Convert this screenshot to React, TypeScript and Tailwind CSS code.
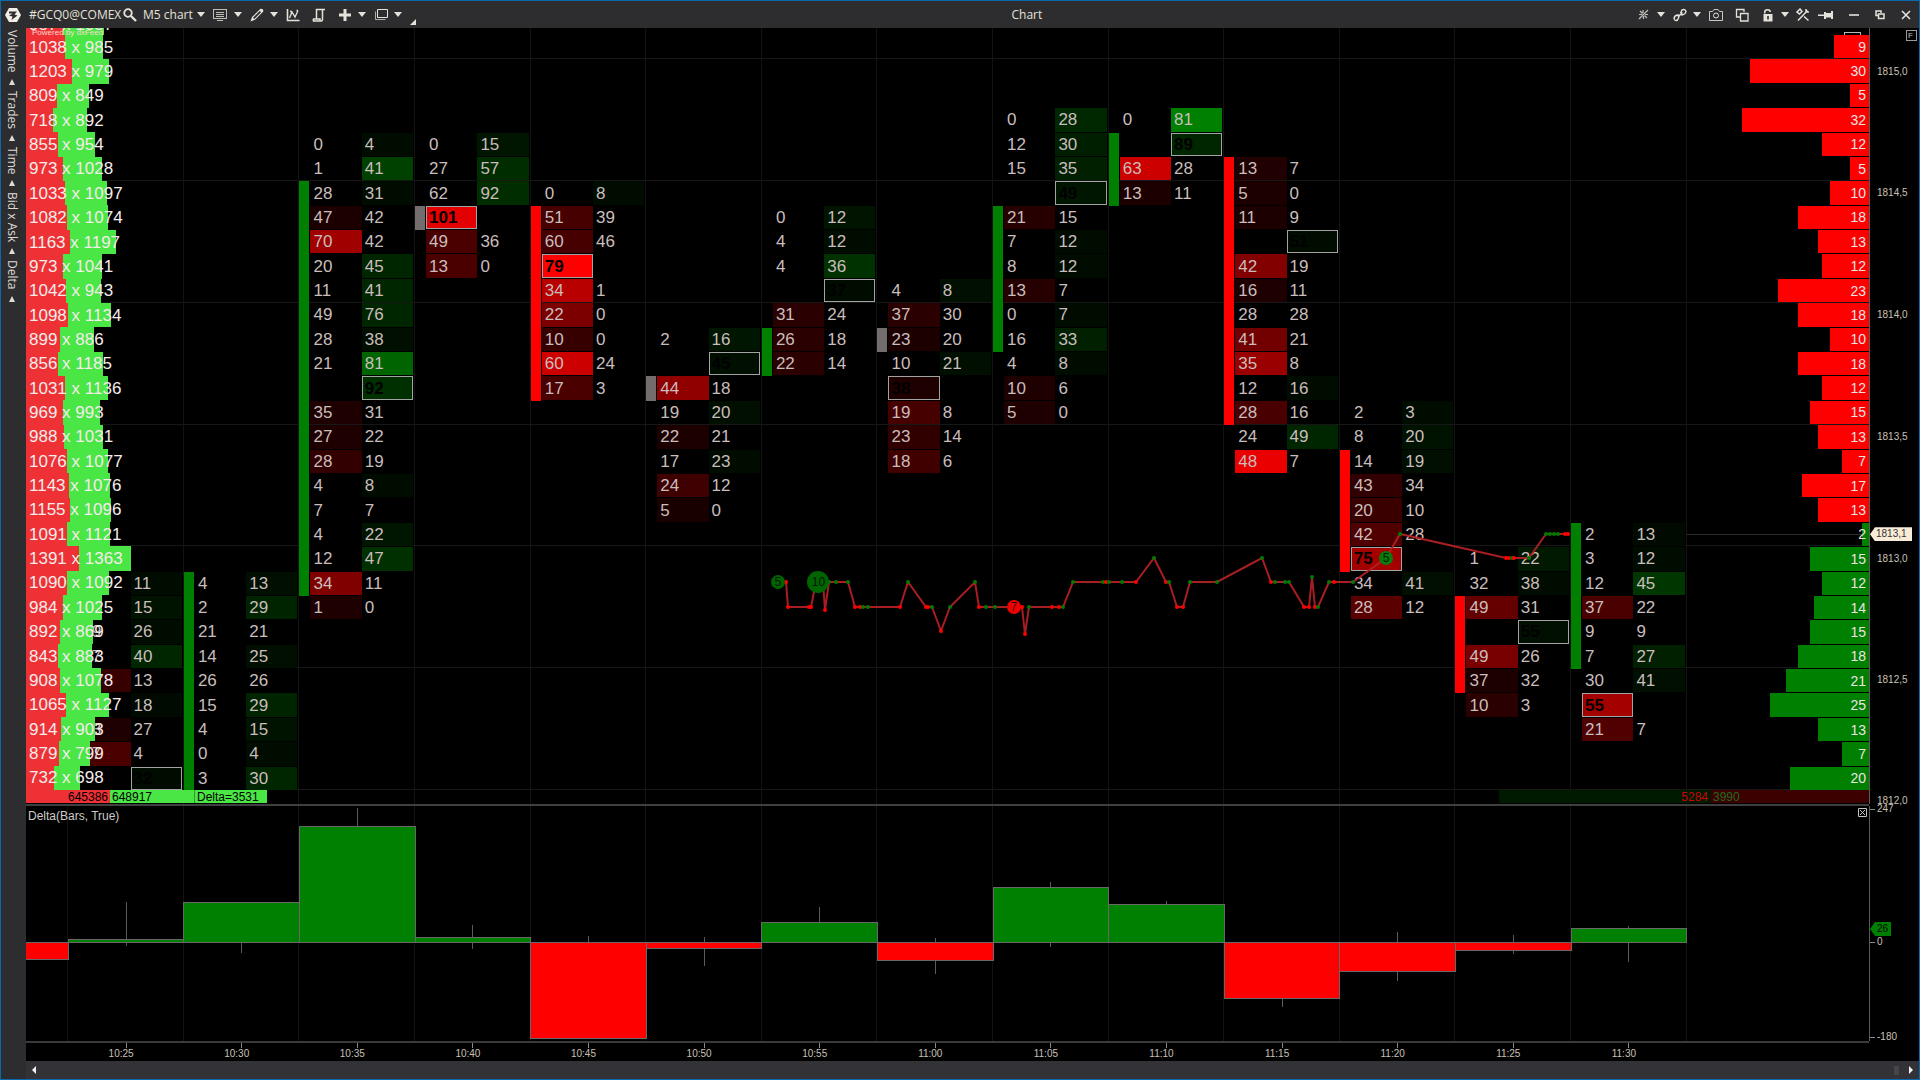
import React from "react";

/* ---------- data ---------- */

type Side = [value: number | null, shade?: number, marked?: boolean];
type Level = [bid: Side, ask: Side];
type Cluster = {
  time?: string;
  start: number;
  candle?: [from: number, to: number, color: "up" | "down" | "flat"];
  levels: Level[];
};

const clusters: Cluster[] = [
  {
    time: "10:25",
    start: 22,
    levels: [
      [[null], [11, 12]],
      [[null], [15, 18]],
      [[19], [26, 12]],
      [[17], [40, 38]],
      [[null, 55], [13]],
      [[null], [18, 10]],
      [[13, 30], [27]],
      [[17, 75], [4]],
      [[null], [32, 12, true]],
    ],
  },
  {
    time: "10:30",
    start: 22,
    candle: [22, 30, "up"],
    levels: [
      [[4], [13, 15]],
      [[2], [29, 35]],
      [[21], [21]],
      [[14], [25, 15]],
      [[26], [26]],
      [[15], [29, 35]],
      [[4], [15, 18]],
      [[0], [4, 12]],
      [[3], [30, 38]],
    ],
  },
  {
    time: "10:35",
    start: 4,
    candle: [6, 22, "up"],
    levels: [
      [[0], [4, 12]],
      [[1], [41, 65]],
      [[28], [31, 12]],
      [[47, 28], [42]],
      [[70, 160], [42]],
      [[20], [45, 38]],
      [[11], [41, 38]],
      [[49], [76, 38]],
      [[28], [38, 15]],
      [[21], [81, 100]],
      [[null], [92, 48, true]],
      [[35, 30], [31]],
      [[27, 30], [22]],
      [[28, 50], [19]],
      [[4], [8, 12]],
      [[7], [7]],
      [[4], [22, 22]],
      [[12], [47, 48]],
      [[34, 128], [11]],
      [[1, 30], [0]],
    ],
  },
  {
    time: "10:40",
    start: 4,
    candle: [7, 7, "flat"],
    levels: [
      [[0], [15, 22]],
      [[27], [57, 45]],
      [[62], [92, 45]],
      [[101, 228, true], [null]],
      [[49, 75], [36]],
      [[13, 75], [0]],
    ],
  },
  {
    time: "10:45",
    start: 6,
    candle: [7, 14, "down"],
    levels: [
      [[0], [8, 12]],
      [[51, 70], [39]],
      [[60, 70], [46]],
      [[79, 255, true], [null]],
      [[34, 185], [1]],
      [[22, 125], [0]],
      [[10, 55], [0]],
      [[60, 205], [24]],
      [[17, 75], [3]],
    ],
  },
  {
    time: "10:50",
    start: 12,
    candle: [14, 14, "flat"],
    levels: [
      [[2], [16, 22]],
      [[null], [45, 15, true]],
      [[44, 145], [18]],
      [[19], [20, 15]],
      [[22, 28], [21]],
      [[17], [23, 12]],
      [[24, 62], [12]],
      [[5, 25], [0]],
    ],
  },
  {
    time: "10:55",
    start: 7,
    candle: [12, 13, "up"],
    levels: [
      [[0], [12, 20]],
      [[4], [12, 12]],
      [[4], [36, 50]],
      [[null], [37, 12, true]],
      [[31, 42], [24]],
      [[26, 42], [18]],
      [[22, 42], [14]],
    ],
  },
  {
    time: "11:00",
    start: 10,
    candle: [12, 12, "flat"],
    levels: [
      [[4], [8, 15]],
      [[37, 42], [30]],
      [[23, 28], [20]],
      [[10], [21, 15]],
      [[38, 30, true], [null]],
      [[19, 70], [8]],
      [[23, 48], [14]],
      [[18, 64], [6]],
    ],
  },
  {
    time: "11:05",
    start: 3,
    candle: [7, 12, "up"],
    levels: [
      [[0], [28, 40]],
      [[12], [30, 30]],
      [[15], [35, 32]],
      [[null], [49, 22, true]],
      [[21, 38], [15]],
      [[7], [12, 12]],
      [[8], [12, 12]],
      [[13, 38], [7]],
      [[0], [7, 12]],
      [[16], [33, 32]],
      [[4], [8, 12]],
      [[10, 30], [6]],
      [[5, 30], [0]],
    ],
  },
  {
    time: "11:10",
    start: 3,
    candle: [4, 6, "up"],
    levels: [
      [[0], [81, 128]],
      [[null], [89, 38, true]],
      [[63, 205], [28]],
      [[13, 28], [11]],
    ],
  },
  {
    time: "11:15",
    start: 5,
    candle: [5, 15, "down"],
    levels: [
      [[13, 32], [7]],
      [[5, 28], [0]],
      [[11, 28], [9]],
      [[null], [51, 12, true]],
      [[42, 130], [19]],
      [[16, 30], [11]],
      [[28], [28]],
      [[41, 115], [21]],
      [[35, 155], [8]],
      [[12], [16, 12]],
      [[28, 72], [16]],
      [[24], [49, 38]],
      [[48, 235], [7]],
    ],
  },
  {
    time: "11:20",
    start: 15,
    candle: [17, 21, "down"],
    levels: [
      [[2], [3, 12]],
      [[8], [20, 18]],
      [[14], [19, 15]],
      [[43, 50], [34]],
      [[20, 58], [10]],
      [[42, 80], [28]],
      [[75, 165, true], [null]],
      [[34], [41, 15]],
      [[28, 90], [12]],
    ],
  },
  {
    time: "11:25",
    start: 21,
    candle: [23, 26, "down"],
    levels: [
      [[1], [22, 25]],
      [[32], [38, 12]],
      [[49, 100], [31]],
      [[null], [55, 15, true]],
      [[49, 120], [26]],
      [[37, 28], [32]],
      [[10, 42], [3]],
    ],
  },
  {
    time: "11:30",
    start: 20,
    candle: [20, 25, "up"],
    levels: [
      [[2], [13, 10]],
      [[3], [12, 12]],
      [[12], [45, 55]],
      [[37, 75], [22]],
      [[9], [9]],
      [[7], [27, 32]],
      [[30], [41, 15]],
      [[55, 165, true], [null]],
      [[21, 80], [7]],
    ],
  },
];

const profile: [number, number][] = [
  [1038, 985], [1203, 979], [809, 849], [718, 892], [855, 954], [973, 1028],
  [1033, 1097], [1082, 1074], [1163, 1197], [973, 1041], [1042, 943],
  [1098, 1134], [899, 886], [856, 1185], [1031, 1136], [969, 993], [988, 1031],
  [1076, 1077], [1143, 1076], [1155, 1096], [1091, 1121], [1391, 1363],
  [1090, 1092], [984, 1025], [892, 869], [843, 883], [908, 1078], [1065, 1127],
  [914, 903], [879, 799], [732, 698],
];

const book = [
  9, 30, 5, 32, 12, 5, 10, 18, 13, 12, 23, 18, 10, 18, 12, 15, 13, 7, 17, 13, 2,
  15, 12, 14, 15, 18, 21, 25, 13, 7, 20,
];
const FIRST_ASK_ROW = 20;

const tape: [x: number, y: number, dot?: "g" | "r"][] = [
  [751, 554], [760, 554, "r"], [762, 579, "r"], [783, 579, "r"], [785, 579, "r"],
  [790, 554], [797, 554], [799, 582, "r"], [803, 554, "g"], [810, 554, "g"],
  [822, 554, "g"], [829, 579, "r"], [834, 579, "r"], [837, 579, "g"],
  [842, 579, "g"], [874, 579, "r"], [882, 554, "g"], [900, 579, "r"],
  [902, 579, "r"], [906, 579, "g"], [915, 603, "r"], [924, 579, "g"],
  [949, 554, "g"], [953, 579, "r"], [960, 579, "g"], [969, 579, "g"],
  [988, 579], [996, 579, "r"], [999, 606, "r"], [1003, 579, "g"],
  [1026, 579, "r"], [1033, 579, "r"], [1037, 579, "g"], [1047, 554, "g"],
  [1077, 554, "g"], [1080, 554, "r"], [1083, 554, "g"], [1096, 554, "g"],
  [1110, 554, "r"], [1128, 530, "g"], [1140, 554, "r"], [1143, 554, "g"],
  [1151, 579, "r"], [1157, 579, "r"], [1164, 554, "g"], [1191, 554, "g"],
  [1236, 530, "g"], [1245, 554, "r"], [1249, 554, "g"], [1259, 554, "g"],
  [1263, 554, "g"], [1278, 579, "r"], [1283, 579, "r"], [1286, 549, "g"],
  [1289, 579, "r"], [1292, 579, "g"], [1303, 554, "g"], [1308, 554, "r"],
  [1327, 554, "g"], [1360, 530], [1374, 506, "g"], [1480, 530, "r"],
  [1483, 530, "r"], [1486, 530, "g"], [1488, 530, "r"], [1503, 530, "g"],
  [1520, 506, "g"], [1524, 506, "g"], [1528, 506, "g"], [1532, 506, "g"],
  [1539, 506, "r"], [1542, 506, "r"],
];

const deltaBars: { value: number; high?: number; low?: number }[] = [
  { value: 3, high: 40, low: -4 },
  { value: 40, low: -11 },
  { value: 116, high: 134 },
  { value: 5, high: 17, low: -7 },
  { value: -96, high: 6 },
  { value: -6, high: 5, low: -24 },
  { value: 20, high: 35 },
  { value: -18, high: 4, low: -32 },
  { value: 55, high: 60, low: -5 },
  { value: 38, high: 41 },
  { value: -56, low: -65 },
  { value: -29, high: 10, low: -39 },
  { value: -8, high: 7, low: -12 },
  { value: 14, high: 16, low: -20 },
];

const priceLabels: [row: number, label: string][] = [
  [2, "1815,0"],
  [7, "1814,5"],
  [12, "1814,0"],
  [17, "1813,5"],
  [22, "1813,0"],
  [27, "1812,5"],
];

const columnsClass = "grid grid-cols-[423fr_repeat(14,1156fr)_1823fr]";
const rowsClass = "grid-rows-[repeat(31,minmax(0,1fr))]";

/* ---------- icons ---------- */

type IconProps = { children: React.ReactNode; w?: number; h?: number; fill?: boolean };

function Icon({ children, w = 14, h = 14, fill = false }: IconProps) {
  return (
    <svg
      width={w}
      height={h}
      viewBox={`0 0 ${w} ${h}`}
      fill={fill ? "currentColor" : "none"}
      stroke={fill ? "none" : "currentColor"}
      aria-hidden="true"
    >
      {children}
    </svg>
  );
}

function Caret() {
  return (
    <Icon w={8} h={5} fill>
      <path d="M0 0H8L4 5Z" />
    </Icon>
  );
}

function Tool({
  label,
  children,
  className = "",
}: {
  label: string;
  children: React.ReactNode;
  className?: string;
}) {
  return (
    <button type="button" aria-label={label} className={`flex h-5 shrink-0 items-center ${className}`}>
      {children}
    </button>
  );
}

/* ---------- header ---------- */

function TitleBar() {
  return (
    <header className="flex h-[27px] shrink-0 items-center bg-[#2d2d30] pr-2 pl-1 font-['Open_Sans',sans-serif] text-xs text-[#e4e2da]">
      <Icon w={16} h={16} fill>
        <path d="M4 1H12L16 8L12 15H4L0 8Z" fill="#f2efe8" />
        <path d="M4 4.500H12L9.500 7.500L12.500 8.500L6.500 13L7.500 9.500L4 8.800L7.500 6.500H4Z" fill="#2d2d30" />
      </Icon>
      <h1 className="ml-2 w-[94px] whitespace-nowrap">#GCQ0@COMEX</h1>
      <Tool label="Find instrument">
        <Icon>
          <circle cx="5" cy="5" r="3.800" strokeWidth="1.800" />
          <path d="M8 8L13 13" strokeWidth="2.400" />
        </Icon>
      </Tool>
      <Tool label="Chart period" className="ml-1.5 gap-1">
        <span className="whitespace-nowrap">M5 chart</span>
        <Caret />
      </Tool>
      <Tool label="Display" className="ml-2 gap-[7px]">
        <Icon>
          <rect x="0.500" y="1.500" width="13" height="9" opacity="0.800" />
          <path d="M3 4.500H11M3 6.500H11M3 8.500H11M4 12.500H10" opacity="0.800" />
        </Icon>
        <Caret />
      </Tool>
      <Tool label="Drawing" className="ml-2 gap-[6px]">
        <Icon fill>
          <path d="M0.500 13.500L2 9L10.500 0.800Q13.800 0.500 13.300 3.500L5 11.800ZM3 9.800L4.300 11L11 4.300L9.700 3Z" fillRule="evenodd" />
        </Icon>
        <Caret />
      </Tool>
      <Tool label="Indicators" className="ml-2">
        <Icon>
          <path d="M1.500 1V12.500H13.500" strokeWidth="1.600" />
          <path d="M3.500 10L6 4L9 9L12 2.500M6 3.500H4M10.500 2.500H12" strokeWidth="1.300" />
        </Icon>
      </Tool>
      <Tool label="Script" className="ml-3">
        <Icon>
          <path d="M4.500 11V1.500H13M10.500 1.500V11.500Q10.500 13 9 13H1.500Q0.800 11 2 11H8V12.500" strokeWidth="1.500" />
        </Icon>
      </Tool>
      <Tool label="Add" className="ml-3 gap-[6px]">
        <Icon fill>
          <path d="M5.500 1H8.500V5.500H13V8.500H8.500V13H5.500V8.500H1V5.500H5.500Z" />
        </Icon>
        <Caret />
      </Tool>
      <Tool label="Windows" className="ml-2 gap-[6px]">
        <Icon>
          <path d="M3.500 1.500H13.500V9.500H3.500Z" />
          <path d="M1.500 3.500V11.500H11.500" opacity="0.700" />
        </Icon>
        <Caret />
      </Tool>
      <span className="mt-[14px] ml-2">
        <Icon w={6} h={6} fill>
          <path d="M6 0V6H0Z" />
        </Icon>
      </span>

      <p className="flex-1 text-center">Chart</p>

      <Tool label="Snap" className="gap-2">
        <Icon w={11} h={11}>
          <path d="M1 10L10 1M2 2L4.500 4.500M6.500 6.500L9 9M5 1V4M1 5.500H4M7 5.500H10M5.500 7V10" strokeWidth="1.200" opacity="0.800" />
        </Icon>
        <Caret />
      </Tool>
      <Tool label="Link" className="ml-2 gap-[6px]">
        <Icon>
          <path d="M6 9L4.500 12Q1.500 13.500 1 10Q2 7 5 7L7 8M7 6L9 7Q12.500 6.500 13 3.500Q12 0.500 9 2L7.500 5M5 9L9.500 4.500" strokeWidth="1.400" />
        </Icon>
        <Caret />
      </Tool>
      <Tool label="Screenshot" className="ml-2">
        <Icon>
          <path d="M0.500 3.500H3.500L5 1.500H9L10.500 3.500H13.500V12.500H0.500Z" opacity="0.850" />
          <circle cx="7" cy="7.500" r="2.500" />
        </Icon>
      </Tool>
      <Tool label="Duplicate" className="ml-3">
        <Icon>
          <path d="M9 4V1.500H1.500V9H5M5.500 5.500H13V13H5.500Z" strokeWidth="1.300" />
        </Icon>
      </Tool>
      <Tool label="Lock" className="ml-3.5 gap-2">
        <Icon w={10} h={14} fill>
          <path d="M0.500 6H9.500V13.500H0.500ZM4.200 8V11.500H5.800V8ZM1 5.500V4Q1 1 4.500 1T8 4H6.500Q6.500 2.500 4.500 2.500T2.500 4V5.500Z" fillRule="evenodd" />
        </Icon>
        <Caret />
      </Tool>
      <Tool label="Settings" className="ml-[7px]">
        <Icon>
          <path d="M2 12.500L11.500 2.500M10 1V4H13M1 4L4 1L6 3.500L3.500 6ZM8 8.500L12.500 12.500" strokeWidth="1.500" />
        </Icon>
      </Tool>
      <Tool label="Pin" className="ml-2">
        <Icon w={16} h={10} fill>
          <path d="M0 4.500H6V2H8V3H13V1H15V9H13V7.500H8V9H6V6H0Z" />
        </Icon>
      </Tool>
      <Tool label="Minimize" className="ml-[15px]">
        <Icon w={10} h={10}>
          <path d="M0 5H10" strokeWidth="1.600" />
        </Icon>
      </Tool>
      <Tool label="Restore" className="ml-4">
        <Icon w={10} h={10}>
          <path d="M6 3V1H1V5.500H3M3.500 4H9V8.500H3.500Z" strokeWidth="1.500" />
        </Icon>
      </Tool>
      <Tool label="Close" className="ml-4">
        <Icon w={10} h={10}>
          <path d="M1 1L9 9M9 1L1 9" strokeWidth="1.600" />
        </Icon>
      </Tool>
    </header>
  );
}

function SideTabs() {
  return (
    <nav className="flex w-[25px] shrink-0 flex-col items-center gap-1.5 bg-[#2d2d30] pt-0.5 pr-1 font-['Open_Sans',sans-serif] text-xs leading-4 text-[#dddbd4]">
      {["Volume", "Trades", "Time", "Bid x Ask", "Delta"].map((tab) => (
        <button key={tab} type="button" className="flex flex-col items-center gap-1.5">
          <span className="[writing-mode:vertical-rl]">{tab}</span>
          <Icon w={6} h={6} fill>
            <path d="M3 0L6 6H0Z" />
          </Icon>
        </button>
      ))}
    </nav>
  );
}

/* ---------- footprint ---------- */

function GridLines({ horizontal = true }: { horizontal?: boolean }) {
  return (
    <>
      <div className={`absolute inset-0 ${columnsClass}`} aria-hidden="true">
        {Array.from({ length: 15 }, (_, i) => (
          <div key={i} className="border-r border-[#131313]" />
        ))}
      </div>
      {horizontal && (
        <div className="absolute inset-x-0 top-[7px] bottom-[14px] grid grid-rows-[1fr_5fr_5fr_5fr_5fr_5fr_5fr]" aria-hidden="true">
          {Array.from({ length: 7 }, (_, i) => (
            <div key={i} className="border-b border-[#171717]" />
          ))}
        </div>
      )}
    </>
  );
}

const candleClass = { up: "bg-[#008000]", down: "bg-[#ff0000]", flat: "bg-[#736d6e]" };

function Cell({ side, row, column }: { side: Side; row: number; column: "bid" | "ask" }) {
  const [value, shade = 0, marked] = side;
  const color = column === "bid" ? `rgb(${shade} 0 0)` : `rgb(0 ${shade} 0)`;
  return (
    <div
      className={`flex items-center overflow-hidden ${column === "bid" ? "col-start-2" : "col-start-3"} ${
        marked ? "border border-[#a3a3a3] pl-0.5 font-bold text-black" : "pl-[3px] text-[#c9bdbd]"
      }`}
      style={{ gridRowStart: row, backgroundColor: color }}
    >
      {value}
    </div>
  );
}

function Footprint() {
  return (
    <div className={`absolute inset-x-0 top-[7px] bottom-[14px] ${columnsClass} text-[17px] leading-none`}>
      <div />
      {clusters.map((cluster) => (
        <div key={cluster.time} className={`grid grid-cols-[11px_1fr_1fr_2px] gap-y-px ${rowsClass}`}>
          {cluster.candle && (
            <div
              className={`col-start-1 mr-px -mb-px ${candleClass[cluster.candle[2]]}`}
              style={{ gridRow: `${cluster.candle[0] + 1} / ${cluster.candle[1] + 2}` }}
            />
          )}
          {cluster.levels.map(([bid, ask], i) => (
            <React.Fragment key={i}>
              <Cell side={bid} row={cluster.start + i + 1} column="bid" />
              <Cell side={ask} row={cluster.start + i + 1} column="ask" />
            </React.Fragment>
          ))}
        </div>
      ))}
    </div>
  );
}

/* Share of the plot's width, in percent, that one traded contract takes. */
const UNIT = 0.00206;

function VolumeProfile() {
  return (
    <div className="absolute inset-0 flex flex-col text-[17px] leading-none text-[#f5ecec]">
      <div className="relative flex h-[7px] items-end overflow-hidden">
        <div className="h-full bg-[#ee3135]" style={{ width: `${987 * UNIT}%` }} />
        <div className="h-full bg-[#49e645]" style={{ width: `${1057 * UNIT}%` }} />
        <span className="absolute bottom-[2px] left-[3px]">987 x 1057</span>
      </div>
      <div className={`grid flex-1 ${rowsClass}`}>
        {profile.map(([bid, ask], i) => (
          <div key={i} className="relative flex items-center">
            <div className="h-full bg-[#ee3135]" style={{ width: `${bid * UNIT}%` }} />
            <div className="h-full bg-[#49e645]" style={{ width: `${ask * UNIT}%` }} />
            <span className="absolute left-[3px] whitespace-nowrap">
              {bid} x {ask}
            </span>
          </div>
        ))}
      </div>
      <div className="h-[14px]">
        <div className="flex h-[13px] text-xs leading-[14px] text-black">
          <div className="w-[84px] overflow-hidden bg-[#ee3135] pr-0.5 text-right">645386</div>
          <div className="w-[84px] overflow-hidden bg-[#49e645] pl-0.5">648917</div>
          <div className="w-[73px] overflow-hidden border-l border-[#2f9a2d] bg-[#49e645] pl-0.5">Delta=3531</div>
        </div>
      </div>
      <span className="absolute top-0 left-[6px] text-[8px] leading-[10px] text-[#ffd9d0]">Powered by dxFeed</span>
    </div>
  );
}

function OrderBook() {
  return (
    <div className="absolute inset-y-0 right-0 flex w-[370px] flex-col pt-[7px]">
      <span className="absolute top-1 right-2 h-2 w-[17px] border border-[#b8b8b8]" />
      <div className={`relative grid flex-1 justify-items-end gap-y-px ${rowsClass}`}>
        {book.map((size, i) => (
          <div
            key={i}
            className={`flex items-center justify-end text-sm leading-none text-[#ece4e4] ${
              i >= FIRST_ASK_ROW ? "bg-[#008000]" : "bg-[#ff0000]"
            }`}
            style={{ width: size * 4 - 1 }}
          >
            <span className="pr-[3px]">{size}</span>
          </div>
        ))}
      </div>
      <div className="flex h-[14px] text-xs leading-[14px]">
        <div className="mb-px flex-1 overflow-hidden bg-[#001a00] pr-[3px] text-right text-[#d00000]">5284</div>
        <div className="mb-px w-[158px] overflow-hidden bg-[#3d0000] pl-0.5 text-[#1d6b1d]">3990</div>
      </div>
    </div>
  );
}

function Badge({ className, children }: { className: string; children: React.ReactNode }) {
  return (
    <span
      className={`absolute flex -translate-x-1/2 -translate-y-1/2 items-center justify-center rounded-full text-xs leading-none text-black/80 ${className}`}
    >
      {children}
    </span>
  );
}

function Tape() {
  return (
    <div className="absolute inset-0">
      <svg className="size-full" viewBox="0 0 1843 776" preserveAspectRatio="none" role="img" aria-label="Trade tape">
        <polyline
          points={tape.map(([x, y]) => `${x},${y}`).join(" ")}
          fill="none"
          stroke="#b22024"
          strokeWidth="2"
          opacity="0.95"
          vectorEffect="non-scaling-stroke"
        />
        {tape.map(([x, y, dot], i) =>
          dot ? <circle key={i} cx={x} cy={y} r="2" fill={dot === "g" ? "#007a00" : "#ff0000"} /> : null,
        )}
      </svg>
      <Badge className="top-[71.4%] left-[40.8%] size-3.5 bg-[#006400]">5</Badge>
      <Badge className="top-[71.4%] left-[43%] size-[22px] bg-[#006400] text-sm">10</Badge>
      <Badge className="top-[74.6%] left-[53.6%] size-3.5 bg-[#f00000]">7</Badge>
      <Badge className="top-[68.3%] left-[73.8%] size-3.5 bg-[#0a7a0a]">5</Badge>
    </div>
  );
}

function PriceAxis() {
  return (
    <div className="flex w-[50px] shrink-0 flex-col border-l border-[#5c5c5c] pt-[7px] text-[10px] leading-none text-[#c9c1b6]">
      <div className={`relative grid flex-1 ${rowsClass}`}>
        <button
          type="button"
          aria-label="Fit chart"
          className="absolute -top-[5px] right-0.5 flex size-[11px] justify-start border border-[#9a9a9a] pl-px text-[8px] leading-[9px]"
        >
          F
        </button>
        {priceLabels.map(([row, label]) => (
          <div key={label} className="flex items-center pl-[7px]" style={{ gridRowStart: row }}>
            {label}
          </div>
        ))}
        <div className="flex items-center" style={{ gridRowStart: 21 }}>
          <span className="flex h-[14px] w-[42px] items-center bg-[#faebd7] pl-[6px] text-[#333] [clip-path:polygon(0_50%,5px_0,100%_0,100%_100%,5px_100%)]">
            1813,1
          </span>
        </div>
      </div>
      <div className="h-[14px] pl-[7px] leading-[22px]">1812,0</div>
    </div>
  );
}

/* ---------- delta panel ---------- */

function DeltaChart() {
  const zero = 136;
  const left = (i: number) => 42.3 + i * 115.6;
  return (
    <svg
      className="absolute inset-0 size-full"
      viewBox="0 0 1843 235"
      preserveAspectRatio="none"
      role="img"
      aria-label="Delta per bar"
      shapeRendering="crispEdges"
    >
      <rect x="-1" y={zero} width="43" height="17" fill="#ff0000" stroke="#686868" />
      {deltaBars.map(({ value, high, low }, i) => {
        const mid = left(i) + 57.8;
        const top = value > 0 ? zero - value : zero;
        return (
          <g key={i}>
            {high !== undefined && <path d={`M${mid} ${zero - high}V${zero}`} stroke="#5a5a5a" />}
            {low !== undefined && <path d={`M${mid} ${zero}V${zero - low}`} stroke="#5a5a5a" />}
            <rect
              x={left(i)}
              y={top}
              width="115.600"
              height={Math.abs(value)}
              fill={value > 0 ? "#008000" : "#ff0000"}
              stroke="#686868"
            />
          </g>
        );
      })}
      <path d={`M0 ${zero}H1661`} stroke="#686868" />
    </svg>
  );
}

function DeltaPanel() {
  return (
    <section className="flex h-[235px] shrink-0">
      <div className="relative flex-1 overflow-hidden">
        <GridLines horizontal={false} />
        <DeltaChart />
        <h2 className="relative pt-[3px] pl-0.5 text-xs leading-[14px] text-[#cfcaca]">Delta(Bars, True)</h2>
        <button type="button" aria-label="Close panel" className="absolute top-0.5 right-0.5 text-[#c4c4c4]">
          <Icon w={9} h={9}>
            <path d="M0.500 0.500H8.500V8.500H0.500ZM2 2L7 7M7 2L2 7" />
          </Icon>
        </button>
      </div>
      <div className="relative flex w-[50px] shrink-0 flex-col border-l border-[#5c5c5c] text-[10px] leading-none text-[#c9c1b6]">
        <div className="-mt-0.5 flex items-center gap-0.5">
          <span className="h-px w-[5px] bg-[#8a8a8a]" />
          247
        </div>
        <div className="mt-[108px] flex h-[14px] w-[21px] items-center bg-[#008000] pl-[7px] text-black [clip-path:polygon(0_50%,5px_0,100%_0,100%_100%,5px_100%)]">
          26
        </div>
        <div className="mt-[1px] flex items-center gap-0.5">
          <span className="h-px w-[5px] bg-[#8a8a8a]" />0
        </div>
        <div className="mt-auto -mb-px flex items-center gap-0.5">
          <span className="h-px w-[5px] bg-[#8a8a8a]" />
          -180
        </div>
      </div>
    </section>
  );
}

function TimeAxis() {
  return (
    <div className="flex h-[20px] shrink-0 pr-[50px]">
      <div className={`flex-1 border-t-2 border-[#3a3a3a] text-[10px] leading-none text-[#c9c1b6] ${columnsClass}`}>
        <div />
        {clusters.map(({ time }) => (
          <div key={time} className="flex flex-col items-center">
            <span className="h-[5px] w-px bg-[#8a8a8a]" />
            <span className="mr-2.5 pt-px">{time}</span>
          </div>
        ))}
      </div>
    </div>
  );
}

/* ---------- window ---------- */

export default function App() {
  return (
    <div className="flex h-screen flex-col overflow-hidden border border-[#0b69b0] bg-black font-['Liberation_Sans',Arial,sans-serif]">
      <TitleBar />
      <div className="flex min-h-0 flex-1">
        <SideTabs />
        <main className="flex min-w-0 flex-1 flex-col">
          <section className="flex min-h-0 flex-1">
            <div className="relative flex-1 overflow-hidden">
              <GridLines />
              <Footprint />
              <div className="absolute top-[65.200%] right-0 left-[90.100%] h-px bg-[#2c2c2c]" />
              <VolumeProfile />
              <OrderBook />
              <Tape />
            </div>
            <PriceAxis />
          </section>
          <div className="mr-[50px] h-0.5 shrink-0 bg-[#3f3f3f]" />
          <DeltaPanel />
          <TimeAxis />
          <div className="flex h-[18px] shrink-0 items-center justify-between bg-[#333337] pr-1.5 pl-1.5 text-[#f2f2f2]">
            <button type="button" aria-label="Scroll left">
              <Icon w={4} h={8} fill>
                <path d="M4 0V8L0 4Z" />
              </Icon>
            </button>
            <span className="mr-2.5 ml-auto h-[9px] w-[5px] bg-[#46464a]" />
            <button type="button" aria-label="Scroll right">
              <Icon w={4} h={8} fill>
                <path d="M0 0V8L4 4Z" />
              </Icon>
            </button>
          </div>
        </main>
      </div>
    </div>
  );
}
